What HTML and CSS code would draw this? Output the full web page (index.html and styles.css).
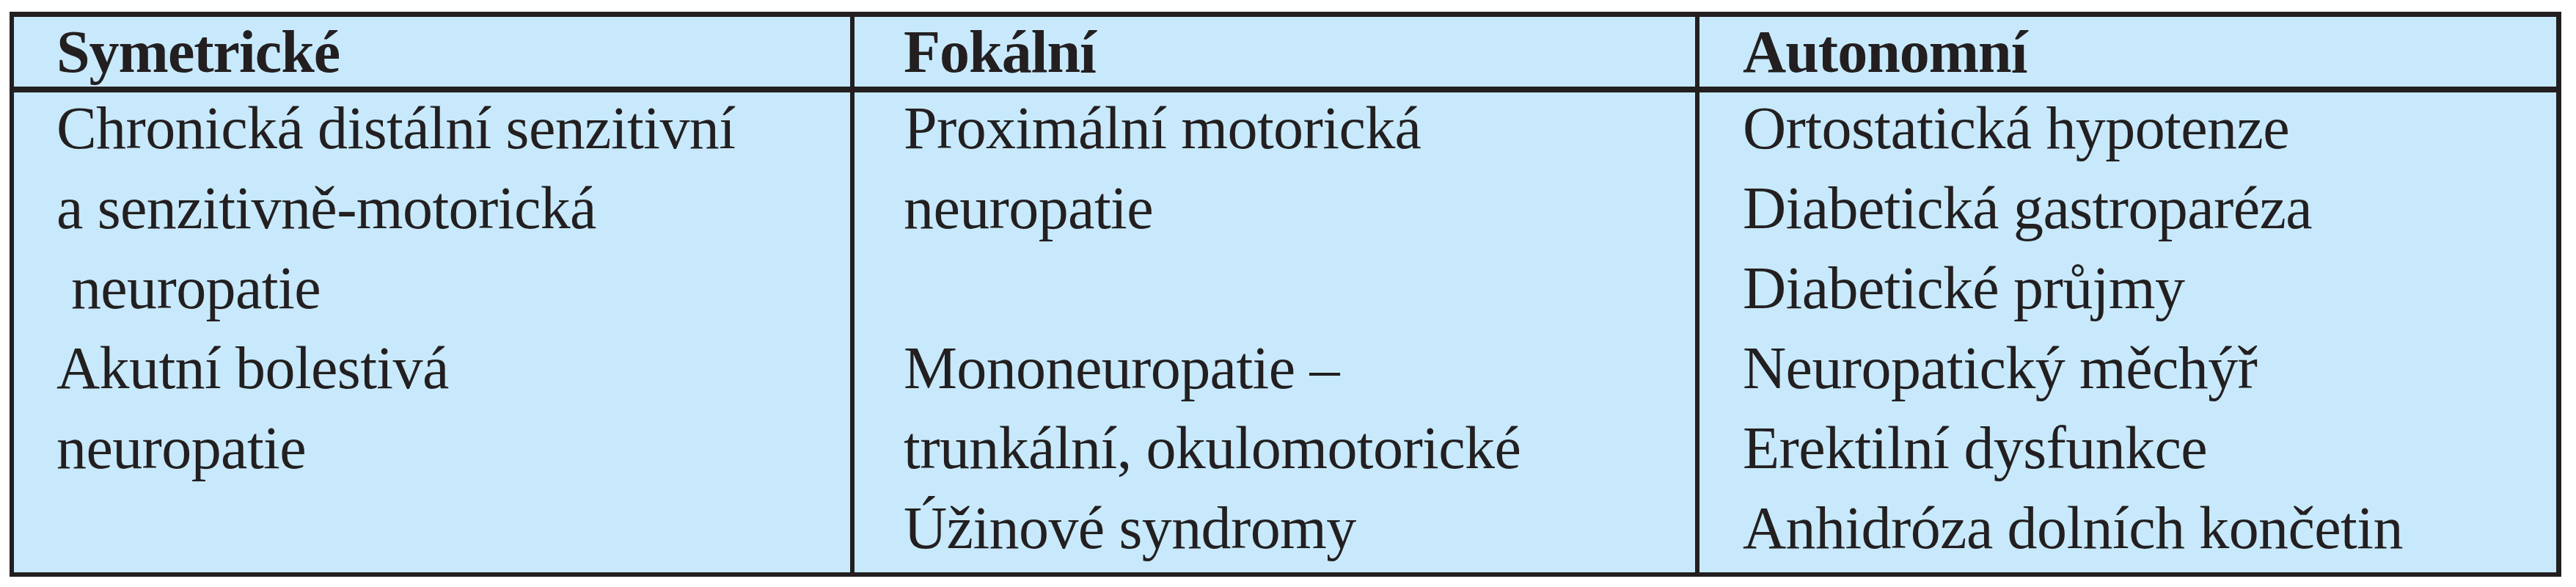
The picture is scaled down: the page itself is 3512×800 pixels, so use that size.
FILE: index.html
```html
<!DOCTYPE html>
<html lang="cs">
<head>
<meta charset="utf-8">
<title>Neuropatie</title>
<link rel="stylesheet" href="styles.css">
</head>
<body>
<div class="table">
  <div class="cell head c1">Symetrické</div>
  <div class="cell head c2">Fokální</div>
  <div class="cell head c3">Autonomní</div>

  <div class="cell body c1">
    <div class="line">Chronická distální senzitivní</div>
    <div class="line">a senzitivně-motorická</div>
    <div class="line">&nbsp;neuropatie</div>
    <div class="line">Akutní bolestivá</div>
    <div class="line">neuropatie</div>
    <div class="line"></div>
  </div>
  <div class="cell body c2">
    <div class="line">Proximální motorická</div>
    <div class="line">neuropatie</div>
    <div class="line"></div>
    <div class="line">Mononeuropatie –</div>
    <div class="line">trunkální, okulomotorické</div>
    <div class="line">Úžinové syndromy</div>
  </div>
  <div class="cell body c3">
    <div class="line">Ortostatická hypotenze</div>
    <div class="line">Diabetická gastroparéza</div>
    <div class="line">Diabetické průjmy</div>
    <div class="line">Neuropatický měchýř</div>
    <div class="line">Erektilní dysfunkce</div>
    <div class="line">Anhidróza dolních končetin</div>
  </div>
</div>
</body>
</html>
```

FILE: styles.css
```css
html, body {
  margin: 0;
  padding: 0;
  background: #ffffff;
}

body {
  font-family: "Liberation Serif", "Times New Roman", serif;
  color: #231f20;
}

.table {
  margin: 16px 0 0 13px;
  width: 3466px;
  display: grid;
  grid-template-columns: 1140px 1152px 1174px;
  grid-template-rows: 103px 654px;
  background: #c7e9fb;
  border-style: solid;
  border-color: #231f20;
  border-width: 7px 7px 6px 6px;
}

.cell {
  box-sizing: border-box;
  white-space: nowrap;
  font-size: 82px;
}

.c2, .c3 {
  border-left: 6px solid #231f20;
}

.c1 { padding-left: 58px; }
.c2 { padding-left: 67px; }
.c3 { padding-left: 59px; }

.head {
  height: 103px;
  font-weight: bold;
  line-height: 82px;
  padding-top: 6px;
  letter-spacing: -1px;
  border-bottom: 8px solid #231f20;
  padding-top: 6.5px;
}

.head.c1 { padding-top: 6.5px; }

.body {
  letter-spacing: -0.6px;
}

.line {
  height: 109px;
  line-height: 97px;
}
```
